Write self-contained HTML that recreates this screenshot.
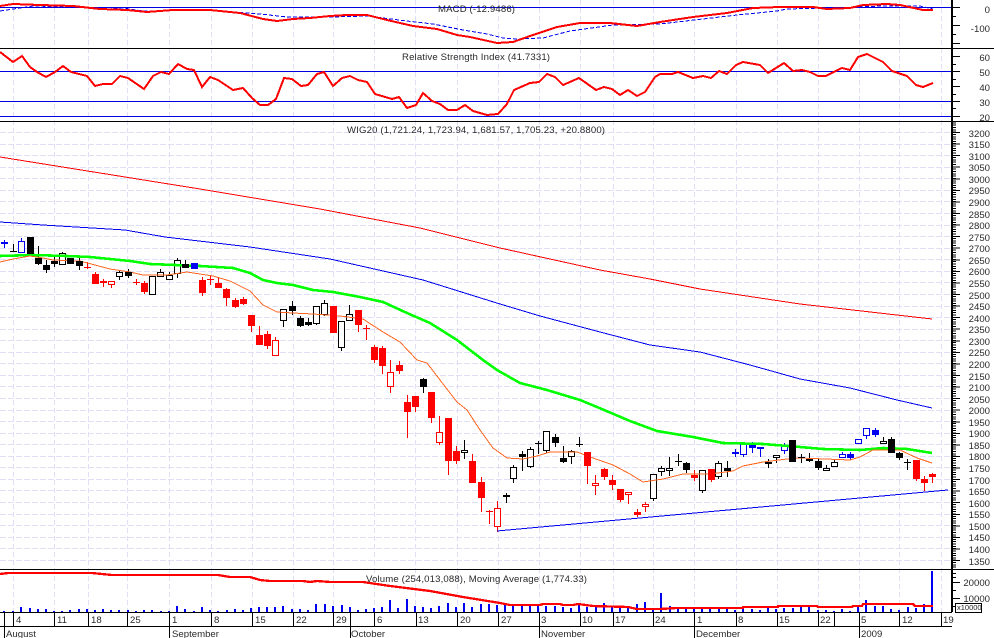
<!DOCTYPE html>
<html>
<head>
<meta charset="utf-8">
<style>
html,body{margin:0;padding:0;background:#fff;width:994px;height:638px;overflow:hidden}
svg{display:block}
text{font-family:"Liberation Sans",sans-serif;font-size:9.6px;fill:#2a2a2a}
.r text{text-anchor:end}
.n{fill:none}
</style>
</head>
<body>
<svg width="994" height="638" viewBox="0 0 994 638" xmlns="http://www.w3.org/2000/svg">
<rect width="994" height="638" fill="#fff"/>
<g shape-rendering="crispEdges">
<path class="n" stroke="#dfdff5" stroke-dasharray="6 2" d="M0 132.5H952M0 144.5H952M0 155.5H952M0 167.5H952M0 178.5H952M0 190.5H952M0 201.5H952M0 213.5H952M0 225.5H952M0 236.5H952M0 248.5H952M0 259.5H952M0 271.5H952M0 282.5H952M0 294.5H952M0 306.5H952M0 317.5H952M0 329.5H952M0 340.5H952M0 352.5H952M0 363.5H952M0 375.5H952M0 386.5H952M0 398.5H952M0 410.5H952M0 421.5H952M0 433.5H952M0 444.5H952M0 456.5H952M0 467.5H952M0 479.5H952M0 490.5H952M0 502.5H952M0 514.5H952M0 525.5H952M0 537.5H952M0 548.5H952M0 560.5H952"/>
<path class="n" stroke="#dfdff5" stroke-dasharray="5 3" d="M13.5 0V612M54.5 0V612M88.5 0V612M127.5 0V612M169.5 0V612M211.5 0V612M252.5 0V612M293.5 0V612M333.5 0V612M374.5 0V612M415.5 0V612M457.5 0V612M498.5 0V612M539.5 0V612M580.5 0V612M613.5 0V612M653.5 0V612M694.5 0V612M736.5 0V612M777.5 0V612M818.5 0V612M859.5 0V612M899.5 0V612M941.5 0V612"/>

<!-- panel level lines -->
<path class="n" stroke="#0000e0" d="M0 7.5H952M0 71.5H952M0 101.5H952M0 116.5H952"/>

<!-- hollow candles and wicks -->
<path class="n" stroke="#000" d="M13.5 244V252M38.5 246V265M46.5 260V273M54.5 257V267M62.5 252V265M79.5 257V270M119.5 271V280M128.5 269V278M160.5 269V277M169.5 272V280M177.5 258V278M185.5 260V268M283.5 309V327M292.5 301V315M300.5 316V327M308.5 318V326M316.5 306V325M324.5 300V316M341.5 321V351M349.5 305V321M423.5 378V393M464.5 440V459M506.5 493V503M513.5 465V483M522.5 451V471M530.5 447V468M538.5 441V454M546.5 431V453M555.5 434V447M563.5 446V463M571.5 450V464M579.5 437V447M653.5 474V501M661.5 466V476M669.5 457V476M678.5 454V466M686.5 462V473M702.5 470V493M718.5 461V479M727.5 461V477M768.5 459V468M776.5 455V463M801.5 454V463M809.5 453V462M818.5 459V470M826.5 465V470M834.5 459V467M883.5 437V443M891.5 437V453M899.5 452V460M907.5 459V470"/>
<path class="n" stroke="#f00" d="M87.5 262V269M95.5 272V284M103.5 279V287M111.5 281V288M136.5 279V285M144.5 281V294M202.5 277V296M210.5 276V285M218.5 277V288M226.5 288V306M235.5 298V308M243.5 297V305M251.5 315V332M259.5 326V345M267.5 331V349M275.5 337V356M358.5 310V332M366.5 325V340M374.5 345V363M382.5 346V374M390.5 360V393M399.5 361V374M407.5 395V438M415.5 396V412M431.5 392V423M439.5 416V445M448.5 418V475M456.5 446V464M472.5 454V483M481.5 477V512M489.5 510V524M497.5 501V532M587.5 452V484M595.5 475V495M604.5 468V480M612.5 475V490M620.5 489V502M628.5 492V504M637.5 509V517M645.5 502V512M694.5 470V481M711.5 469V482M916.5 460V481M924.5 476V491M932.5 473V483"/>
<path class="n" stroke="#0000f0" d="M4.5 240V248M21.5 238V253M735.5 449V457M743.5 444V457M752.5 442V453M760.5 447V457M784.5 443V454M842.5 452V458M850.5 452V460M866.5 428V439M875.5 428V437"/>
<path fill="#fff" stroke="#000" d="M59.5 253.5h6v11h-6zM116.5 272.5h6v4h-6zM149.5 276.5h6v18h-6zM157.5 272.5h6v4h-6zM166.5 275.5h6v4h-6zM174.5 260.5h6v13h-6zM280.5 309.5h6v11h-6zM313.5 306.5h6v17h-6zM321.5 303.5h6v11h-6zM338.5 321.5h6v26h-6zM346.5 314.5h6v6h-6zM461.5 450.5h6v2h-6zM510.5 467.5h6v11h-6zM527.5 449.5h6v17h-6zM543.5 431.5h6v19h-6zM568.5 451.5h6v5h-6zM650.5 474.5h6v24h-6zM658.5 468.5h6v3h-6zM666.5 468.5h6v2h-6zM699.5 470.5h6v20h-6zM715.5 463.5h6v13h-6zM773.5 455.5h6v2h-6zM823.5 468.5h6v2h-6zM831.5 462.5h6v4h-6zM880.5 441.5h6v2h-6z"/>
<path fill="#fff" stroke="#f00" d="M108.5 281.5h6v3h-6zM272.5 340.5h6v15h-6zM387.5 372.5h6v14h-6zM436.5 432.5h6v10h-6zM494.5 508.5h6v18h-6zM592.5 483.5h6v2h-6zM625.5 492.5h6v2h-6zM642.5 504.5h6v2h-6z"/>
<path fill="#fff" stroke="#0000f0" d="M18.5 241.5h6v11h-6zM740.5 444.5h6v10h-6zM781.5 446.5h6v4h-6zM839.5 454.5h6v3h-6zM855.5 439.5h6v4h-6zM863.5 428.5h6v7h-6z"/>

<!-- moving averages -->
<polyline class="n" stroke="#f00" points="0,157 100,173 200,189 320,209 420,228 500,248 600,270 650,279 700,289 800,304 932,319"/>
<polyline class="n" stroke="#0000f0" points="0,222 43,225 125,230 165,237 250,247 330,259 423,280 500,304 540,316 600,332 650,345 700,352 750,365 800,379 850,388 897,400 932,408"/>
<polyline class="n" stroke="#0f0" stroke-width="2.6" points="0,256 33,255 66,256 90,257 130,261 150,264 200,266 233,268 250,273 263,280 277,283 293,285 313,290 333,292 360,297 383,302 407,313 430,323 457,340 483,360 497,370 520,383 547,390 580,400 597,407 630,421 657,431 693,437 723,443 763,444 800,447 823,449 860,450 883,448 907,449 932,453"/>
<polyline class="n" stroke="#ff6620" points="0,262 13,259 30,256 43,258 53,260 80,261 110,269 130,272 143,275 167,275 187,272 213,276 230,281 250,291 263,305 277,312 293,313 313,314 340,316 363,319 383,332 400,342 417,360 427,363 440,380 457,402 467,410 480,430 493,448 507,458 523,459 537,456 550,452 577,452 593,458 613,465 630,474 643,482 663,479 683,474 710,474 733,471 743,466 763,462 787,459 800,458 850,460 860,457 873,450 900,450 917,458 932,463"/>
<polyline class="n" stroke="#0000f0" points="497,531 948,490"/>

<!-- filled candles -->
<path fill="#000" d="M10 251h7v1h-7zM27 237h7v17h-7zM35 258h7v6h-7zM43 265h7v5h-7zM51 261h7v3h-7zM67 258h7v6h-7zM76 261h7v5h-7zM125 272h7v4h-7zM182 264h7v4h-7zM289 306h7v5h-7zM297 318h7v8h-7zM305 322h7v3h-7zM420 379h7v8h-7zM503 495h7v2h-7zM519 454h7v3h-7zM535 443h7v1h-7zM552 437h7v6h-7zM560 458h7v4h-7zM576 444h7v1h-7zM675 461h7v1h-7zM683 463h7v7h-7zM724 468h7v3h-7zM765 462h7v2h-7zM789 440h7v22h-7zM798 457h7v1h-7zM806 459h7v2h-7zM815 461h7v7h-7zM888 439h7v14h-7zM896 453h7v5h-7zM904 462h7v1h-7z"/>
<path fill="#f00" d="M84 267h7v1h-7zM92 274h7v10h-7zM100 281h7v2h-7zM133 282h7v1h-7zM141 283h7v9h-7zM199 280h7v13h-7zM207 279h7v1h-7zM215 283h7v5h-7zM223 289h7v9h-7zM232 300h7v7h-7zM240 299h7v5h-7zM248 315h7v11h-7zM256 335h7v10h-7zM264 334h7v12h-7zM330 306h7v27h-7zM355 310h7v15h-7zM363 328h7v1h-7zM371 347h7v13h-7zM379 348h7v18h-7zM396 365h7v6h-7zM404 402h7v10h-7zM412 396h7v11h-7zM428 392h7v26h-7zM445 418h7v43h-7zM453 451h7v10h-7zM469 461h7v22h-7zM478 482h7v16h-7zM486 511h7v1h-7zM584 452h7v14h-7zM601 469h7v8h-7zM609 480h7v5h-7zM617 489h7v11h-7zM634 512h7v3h-7zM691 475h7v3h-7zM708 469h7v11h-7zM913 460h7v19h-7zM921 479h7v4h-7zM929 474h7v3h-7z"/>
<path fill="#0000f0" d="M1 242h7v2h-7zM191 263h7v6h-7zM732 452h7v2h-7zM749 445h7v3h-7zM757 447h7v2h-7zM847 454h7v4h-7zM872 430h7v5h-7z"/>

<!-- MACD -->
<polyline class="n" stroke="#0000f0" stroke-dasharray="4 2" points="0,11 20,8 33,6 73,7 123,8 143,11 200,10 233,12 260,14 287,17 330,17 367,16 407,21 433,24 463,30 487,34 503,38 517,39 543,38 570,31 613,25 660,24 737,15 777,11 787,9 860,7 880,6 920,6 933,9"/>
<polyline class="n" stroke="#f00" stroke-width="2" points="0,6 13,4 40,5 73,6 100,9 127,10 147,12 173,10 210,10 240,13 263,19 277,21 293,19 310,18 330,16 347,15 367,15 387,20 413,26 437,29 457,35 470,37 497,43 513,42 530,36 557,27 580,23 610,23 637,26 660,22 693,17 727,13 753,8 780,7 813,7 827,9 850,8 863,5 887,4 900,5 923,10 933,10"/>

<!-- RSI -->
<polyline class="n" stroke="#f00" stroke-width="2" points="0,52 13,62 22,56 30,67 37,72 46,77 55,72 63,66 71,72 87,76 95,86 103,84 112,84 120,76 128,78 144,89 153,76 161,72 169,74 178,64 187,69 194,70 202,87 210,77 218,80 233,90 243,88 252,98 260,105 268,105 276,99 284,78 292,79 301,86 308,85 317,74 324,72 333,86 342,78 350,76 358,80 367,82 375,94 392,99 399,97 407,108 416,105 423,93 432,101 440,104 448,110 457,110 465,105 473,111 487,115 498,114 507,104 514,90 530,83 539,82 547,74 555,77 563,85 579,78 596,90 604,87 612,89 620,95 628,90 637,96 645,92 655,77 660,74 672,74 678,72 693,78 703,76 711,78 719,71 727,74 736,65 743,62 760,65 768,73 784,63 793,71 802,70 810,72 818,76 826,76 842,68 850,70 858,57 867,54 877,59 883,62 892,71 907,76 916,85 923,87 933,83"/>

<!-- Volume -->
<path class="n" stroke="#0000f0" stroke-width="2" d="M4 611V612M13 611V612M21 607V612M30 608V612M38 609V612M46 609V612M54 611V612M62 611V612M70 610V612M79 609V612M87 609V612M95 610V612M103 609V612M111 610V612M119 610V612M128 610V612M136 611V612M144 610V612M152 610V612M161 611V612M169 611V612M177 606V612M185 609V612M194 611V612M202 607V612M210 610V612M218 611V612M227 610V612M235 609V612M243 610V612M251 608V612M259 607V612M267 607V612M275 607V612M283 606V612M292 609V612M300 609V612M308 610V612M316 604V612M325 604V612M333 606V612M342 605V612M350 607V612M358 610V612M366 609V612M374 608V612M382 607V612M390 600V612M398 608V612M407 599V612M415 606V612M423 607V612M431 608V612M439 606V612M448 603V612M456 607V612M464 603V612M472 607V612M481 604V612M489 604V612M497 605V612M505 605V612M513 606V612M522 606V612M530 605V612M538 606V612M546 606V612M555 606V612M563 607V612M571 608V612M579 605V612M587 607V612M596 605V612M604 603V612M612 606V612M620 608V612M628 607V612M637 604V612M645 602V612M653 608V612M661 593V612M670 606V612M678 607V612M686 608V612M694 608V612M702 609V612M710 609V612M719 609V612M727 609V612M735 610V612M743 609V612M752 609V612M760 610V612M768 607V612M776 609V612M784 608V612M793 608V612M801 607V612M809 607V612M818 610V612M826 610V612M834 611V612M842 609V612M850 611V612M858 607V612M866 600V612M875 606V612M883 606V612M891 609V612M899 610V612M908 607V612M916 608V612M924 604V612M932 571V612"/>
<polyline class="n" stroke="#f00" stroke-width="2.3" points="0,574 8,573 92,573 112,575 218,575 230,577 250,577 260,580 270,581 303,581 310,582 317,581 330,582 363,582 390,586 430,591 463,597 500,603 510,605 540,605 543,604 560,604 563,605 573,605 578,604 593,606 628,607 637,609 660,609 677,608 743,608 743,607 778,607 778,606 817,606 818,607 852,607 853,606 862,606 863,604 913,604 915,606 933,606"/>

<!-- frame -->
<path class="n" stroke="#000" d="M0 48.5H994M0 121.5H994M0 569.5H994M0 612.5H952M0 626.5H952"/>
<line x1="952" y1="0" x2="952" y2="612" stroke="#000" stroke-width="2"/>
<!-- right ticks -->
<path class="n" stroke="#000" d="M952 7.5H960M952 16.5H956M952 25.5H960M952 34.5H956M952 43.5H960M952 56.5H960M952 64.5H956M952 71.5H960M952 79.5H956M952 86.5H960M952 94.5H956M952 101.5H960M952 108.5H956M952 116.5H960M952 573.5H956M952 577.5H956M952 582.5H960M952 590.5H956M952 598.5H960M952 606.5H956"/>
<line x1="954" y1="122.4" x2="954" y2="569" stroke="#000" stroke-width="4" stroke-dasharray="1 1.314"/>
<line x1="956" y1="132" x2="956" y2="569" stroke="#000" stroke-width="8" stroke-dasharray="1 10.57"/>
<!-- date ticks -->
<path class="n" stroke="#000" d="M4.5 612V638M13.5 612V626M54.5 612V626M88.5 612V626M127.5 612V626M169.5 612V638M211.5 612V626M252.5 612V626M293.5 612V626M333.5 612V626M350.5 612V638M374.5 612V626M416.5 612V626M457.5 612V626M498.5 612V626M539.5 612V638M580.5 612V626M613.5 612V626M653.5 612V626M694.5 612V638M736.5 612V626M777.5 612V626M818.5 612V626M834.5 612V626M859.5 612V638M899.5 612V626M941.5 612V626"/>
<rect x="955.5" y="603.5" width="26" height="9" fill="#fff" stroke="#000"/>
</g>

<!-- titles -->
<text x="438" y="12" textLength="77" lengthAdjust="spacing">MACD (-12.9486)</text>
<text x="402" y="60" textLength="148" lengthAdjust="spacing">Relative Strength Index (41.7331)</text>
<text x="347" y="133" textLength="258" lengthAdjust="spacing">WIG20 (1,721.24, 1,723.94, 1,681.57, 1,705.23, +20.8800)</text>
<text x="366" y="582" textLength="221" lengthAdjust="spacing">Volume (254,013,088), Moving Average (1,774.33)</text>

<!-- right labels -->
<g class="r">
<text x="990" y="13">0</text><text x="990" y="32">-100</text>
<text x="990" y="61">60</text><text x="990" y="76">50</text><text x="990" y="91">40</text><text x="990" y="106">30</text><text x="990" y="121">20</text>
<text x="990" y="137">3200</text><text x="990" y="148">3150</text><text x="990" y="160">3100</text><text x="990" y="171">3050</text><text x="990" y="183">3000</text><text x="990" y="194">2950</text><text x="990" y="206">2900</text><text x="990" y="218">2850</text><text x="990" y="229">2800</text><text x="990" y="241">2750</text><text x="990" y="252">2700</text><text x="990" y="264">2650</text><text x="990" y="275">2600</text><text x="990" y="287">2550</text><text x="990" y="299">2500</text><text x="990" y="310">2450</text><text x="990" y="322">2400</text><text x="990" y="333">2350</text><text x="990" y="345">2300</text><text x="990" y="356">2250</text><text x="990" y="368">2200</text><text x="990" y="380">2150</text><text x="990" y="391">2100</text><text x="990" y="403">2050</text><text x="990" y="414">2000</text><text x="990" y="426">1950</text><text x="990" y="437">1900</text><text x="990" y="449">1850</text><text x="990" y="460">1800</text><text x="990" y="472">1750</text><text x="990" y="484">1700</text><text x="990" y="495">1650</text><text x="990" y="507">1600</text><text x="990" y="518">1550</text><text x="990" y="530">1500</text><text x="990" y="541">1450</text><text x="990" y="553">1400</text><text x="990" y="565">1350</text>
<text x="990" y="586">20000</text><text x="990" y="602">10000</text>
</g>
<text x="957" y="610" style="font-size:7.5px">x10000</text>

<!-- dates -->
<text x="16" y="623">4</text><text x="57" y="623">11</text><text x="91" y="623">18</text><text x="130" y="623">25</text><text x="172" y="623">1</text><text x="214" y="623">8</text><text x="255" y="623">15</text><text x="296" y="623">22</text><text x="336" y="623">29</text><text x="377" y="623">6</text><text x="418" y="623">13</text><text x="460" y="623">20</text><text x="501" y="623">27</text><text x="541" y="623">3</text><text x="582" y="623">10</text><text x="615" y="623">17</text><text x="655" y="623">24</text><text x="697" y="623">1</text><text x="738" y="623">8</text><text x="779" y="623">15</text><text x="820" y="623">22</text><text x="861" y="623">5</text><text x="902" y="623">12</text><text x="943" y="623">19</text>
<text x="6" y="637">August</text><text x="172" y="637">September</text><text x="351" y="637">October</text><text x="541" y="637">November</text><text x="696" y="637">December</text><text x="861" y="637">2009</text>
</svg>
</body>
</html>
